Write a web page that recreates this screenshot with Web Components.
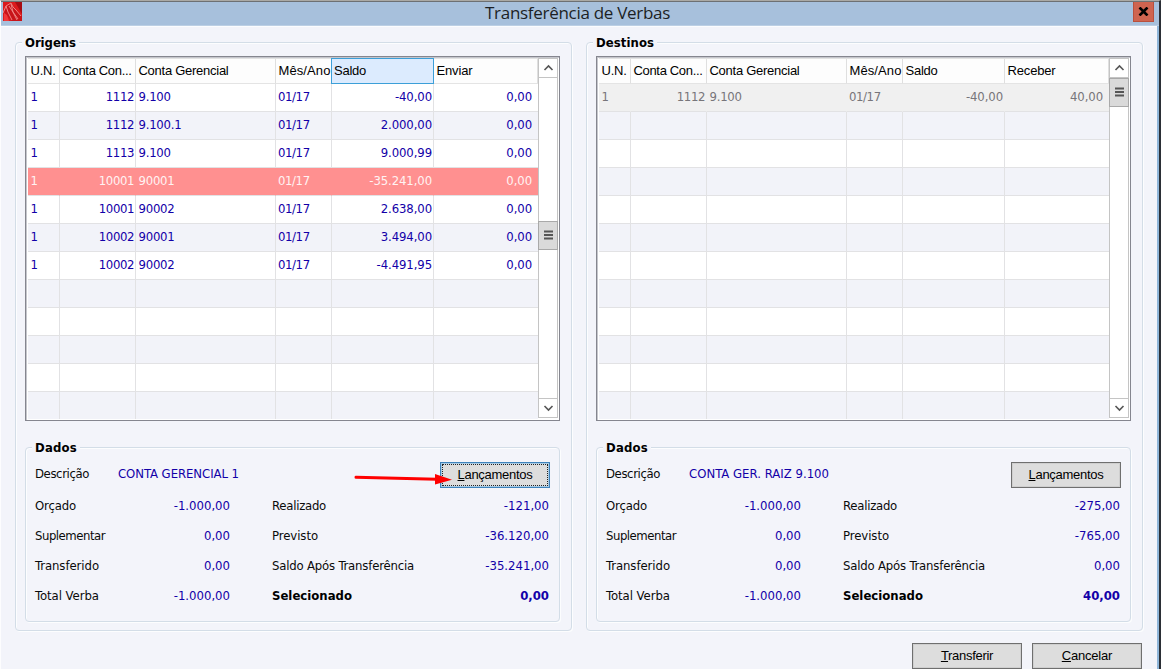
<!DOCTYPE html>
<html lang="pt-BR">
<head>
<meta charset="utf-8">
<title>Transferência de Verbas</title>
<style>
  html, body { margin: 0; height: 100%; overflow: hidden; }
  body { font: 13px/16px "DejaVu Sans Condensed", "DejaVu Sans", sans-serif; color: #0a0a0a; }
</style>
</head>
<body>
<tv-window>
  <tv-panel name="Origens" desc="CONTA GERENCIAL 1" desc-width="121" last="Enviar" sorted focused thumb="163"
    rows="1|1112|9.100|01/17|-40,00|0,00;1|1112|9.100.1|01/17|2.000,00|0,00;1|1113|9.100|01/17|9.000,99|0,00;!1|10001|90001|01/17|-35.241,00|0,00;1|10001|90002|01/17|2.638,00|0,00;1|10002|90001|01/17|3.494,00|0,00;1|10002|90002|01/17|-4.491,95|0,00"
    values="-1.000,00|-121,00|0,00|-36.120,00|0,00|-35.241,00|-1.000,00|0,00"></tv-panel>
  <tv-panel name="Destinos" desc="CONTA GER. RAIZ 9.100" desc-width="140" last="Receber" thumb="20"
    rows="#1|1112|9.100|01/17|-40,00|40,00"
    values="-1.000,00|-275,00|0,00|-765,00|0,00|0,00|-1.000,00|40,00"></tv-panel>
  <tv-button slot="actions"><tv-text w="52"><u>T</u>ransferir</tv-text></tv-button>
  <tv-button slot="actions"><tv-text w="50"><u>C</u>ancelar</tv-text></tv-button>
</tv-window>

<script>
// text run that is tracked to a given width
customElements.define('tv-text', class extends HTMLElement {
  connectedCallback() {
    if (this.shadowRoot) return
    const root = this.attachShadow({mode: 'open'})
    root.innerHTML = `
    <style>
      :host { display: inline-block; white-space: nowrap; }
      span { display: inline-block; }
    </style>
    <span><slot></slot></span>`
    const width = parseFloat(this.getAttribute('w'))
    if (!width) return
    const span = root.querySelector('span')
    const natural = span.getBoundingClientRect().width
    span.style.letterSpacing = `${(width - natural) / this.textContent.length}px`
  }
})

customElements.define('tv-button', class extends HTMLElement {
  connectedCallback() {
    if (this.shadowRoot) return
    this.attachShadow({mode: 'open'}).innerHTML = `
    <style>
      :host {
        display: flex;
        align-items: center;
        justify-content: center;
        box-sizing: border-box;
        width: 110px;
        height: 26px;
        border: 1px solid #6f6f6f;
        background: #dddddd;
        box-shadow: inset 0 0 0 1px #cfcfcf;
        font: 13px/16px "Liberation Sans", Arial, sans-serif;
        color: #000;
        position: relative;
      }
      :host([focused]) { border-color: #3f83bb; box-shadow: inset 0 0 0 1px #a9cbe4; }
      :host([focused])::after {
        content: "";
        position: absolute;
        inset: 1px;
        border: 1px dotted #222;
      }
    </style>
    <slot></slot>`
  }
})

customElements.define('tv-group', class extends HTMLElement {
  connectedCallback() {
    if (this.shadowRoot) return
    const name = this.getAttribute('name')
    this.attachShadow({mode: 'open'}).innerHTML = `
    <style>
      :host {
        display: block;
        box-sizing: border-box;
        border: 1px solid #d3dde7;
        border-radius: 4px;
        box-shadow: inset 1px 1px 0 #fcfdfe, 1px 1px 0 #fcfdfe;
      }
      .legend {
        display: block;
        width: max-content;
        height: 16px;
        margin: -8px 0 0 6px;
        padding: 0 3px;
        background: #f3f4fa;
        font-weight: bold;
        color: #000;
      }
    </style>
    <div class="legend"><tv-text w="${this.getAttribute('w')}">${name}</tv-text></div>
    <slot></slot>`
  }
})

customElements.define('tv-scrollbar', class extends HTMLElement {
  connectedCallback() {
    if (this.shadowRoot) return
    const top = parseInt(this.getAttribute('thumb')) - 20
    this.attachShadow({mode: 'open'}).innerHTML = `
    <style>
      :host {
        display: flex;
        flex-direction: column;
        box-sizing: border-box;
        width: 20px;
        background: #fff;
        border: solid #c4c4c4;
        border-width: 0 1px;
      }
      .arrow, .thumb { box-sizing: border-box; flex: none; display: flex; align-items: center; justify-content: center; }
      .arrow { height: 20px; border: solid #c4c4c4; border-width: 1px 0; }
      .down { margin-top: auto; }
      .thumb { height: 29px; margin: ${top}px -1px 0; background: #dadada; border: 1px solid #a9a9a9; }
    </style>
    <div class="arrow"><svg width="11" height="8" viewBox="0 0 11 8"><path d="M1.500 6 5.500 2 9.500 6" fill="none" stroke="#555" stroke-width="1.600"/></svg></div>
    <div class="thumb"><svg width="9" height="11" viewBox="0 0 9 11"><path d="M0 1.500H9M0 5H9M0 8.500H9" stroke="#555" stroke-width="1.800"/></svg></div>
    <div class="arrow down"><svg width="11" height="8" viewBox="0 0 11 8"><path d="M1.500 2 5.500 6 9.500 2" fill="none" stroke="#555" stroke-width="1.600"/></svg></div>`
  }
})

customElements.define('tv-grid', class extends HTMLElement {
  getHeaders() {
    const last = this.getAttribute('last')
    return [['U.N.', 25], ['Conta Con...', 69], ['Conta Gerencial', 90], ['Mês/Ano', 52], ['Saldo', 32], [last, last === 'Enviar' ? 36 : 48]]
  }

  getRows() {
    const rows = this.getAttribute('rows').split(';').map((line) => {
      const kind = line[0] === '!' ? 'negative' : line[0] === '#' ? 'disabled' : ''
      return {kind, cells: line.replace(/^[!#]/, '').split('|')}
    })
    while (rows.length < 12) rows.push({kind: '', cells: ['', '', '', '', '', '']})
    return rows
  }

  connectedCallback() {
    if (this.shadowRoot) return
    const sorted = this.hasAttribute('sorted')
    const head = this.getHeaders().map(([text, w]) =>
      `<div class="${sorted && text === 'Saldo' ? 'sorted' : ''}"><tv-text w="${w}">${text}</tv-text></div>`).join('')
    const body = this.getRows().map(({kind, cells}) =>
      `<div class="row ${kind}">${cells.map((c) => `<div>${c}</div>`).join('')}</div>`).join('')
    this.attachShadow({mode: 'open'}).innerHTML = `
    <style>
      :host {
        display: flex;
        box-sizing: border-box;
        height: 365px;
        padding: 1px 1px 2px;
        border: 1px solid #85868f;
        box-shadow: inset 1px 1px 0 #c5c6cc;
        background: #fff;
      }
      .table { flex: 1; padding-left: 1px; }
      .row, .head { display: grid; grid-template-columns: 32px 76px 140px 56px 102px 1fr; box-sizing: border-box; }
      .head {
        height: 26px;
        border-top: 1px solid #e2e2e2;
        font: 13px/16px "Liberation Sans", Arial, sans-serif;
        color: #000;
      }
      .head > div { box-sizing: border-box; background: #fdfdfd; border-right: 1px solid #dfdfdf; border-bottom: 1px solid #e4e4e4; padding: 4px 0 0 2.5px; }
      .head .sorted { margin: -1px 0 0 -1px; padding-left: 2px; border: 1px solid #3c9fd8; background: #dcebfe; }
      .row { height: 28px; line-height: 25px; letter-spacing: -0.4px; color: #1200a8; }
      .row > div { box-sizing: border-box; padding-left: 2.5px; border-right: 1px solid #e2e2e4; border-bottom: 1px solid #e2e2e4; }
      .row:nth-child(odd) { background: #f2f3f9; }
      .row > div:nth-child(2), .row > div:nth-child(5), .row > div:nth-child(6) { text-align: right; padding-right: 1px; }
      .row > div:nth-child(3) { letter-spacing: -0.25px; }
      .row > div:nth-child(4) { padding-left: 2px; }
      .row > div:nth-child(5), .row > div:nth-child(6) { letter-spacing: -0.1px; }
      .row > div:nth-child(6) { padding-right: 6px; border-right: 0; }
      .row.negative { background: #ff9090; color: #fff3f3; }
      .row.disabled { background: #f0f0f0; color: #77757a; }
      .row.negative > div, .row.disabled > div { border-right-color: transparent; }
      .row:last-child { height: 27px; }
      .row:last-child > div { border-bottom: 0; }
    </style>
    <div class="table"><div class="head">${head}</div>${body}</div>
    <tv-scrollbar thumb="${this.getAttribute('thumb')}"></tv-scrollbar>`
  }
})

customElements.define('tv-summary', class extends HTMLElement {
  connectedCallback() {
    if (this.shadowRoot) return
    const v = this.getAttribute('values').split('|')
    const labels = [['Orçado', 41], ['Realizado', 54], ['Suplementar', 70], ['Previsto', 46], ['Transferido', 64],
      ['Saldo Após Transferência', 142], ['Total Verba', 64], ['Selecionado', 80]]
    const cells = labels.map(([text, w], i) =>
      `<div><tv-text w="${w}">${text}</tv-text></div><div class="value">${v[i]}</div>`).join('')
    this.attachShadow({mode: 'open'}).innerHTML = `
    <style>
      :host { display: block; padding: 6px 10px 0 9px; }
      .top { display: flex; height: 26px; }
      .top > * { flex: none; }
      .name { width: 83px; padding-top: 4px; }
      .desc { padding-top: 4px; color: #1200a8; }
      tv-button { margin: 0 -1px 0 auto; }
      .grid { display: grid; grid-template-columns: 85px 110px 42px 120px 1fr; grid-auto-rows: 30px; line-height: 30px; margin-top: 3px; }
      .grid > div:nth-child(4n+3) { grid-column: 4; }
      .grid > div:nth-child(4n+1) { grid-column: 1; }
      .value { text-align: right; color: #1200a8; }
      .grid > div:nth-child(n+15) { font-weight: bold; }
      .grid > div:nth-child(15) { color: #000; }
    </style>
    <div class="top">
      <div class="name"><tv-text w="54">Descrição</tv-text></div>
      <div class="desc"><tv-text w="${this.getAttribute('desc-width')}">${this.getAttribute('desc')}</tv-text></div>
      <tv-button ${this.hasAttribute('focused') ? 'focused' : ''}><tv-text w="75"><u>L</u>ançamentos</tv-text></tv-button>
    </div>
    <div class="grid">${cells}</div>`
  }
})

customElements.define('tv-panel', class extends HTMLElement {
  connectedCallback() {
    if (this.shadowRoot) return
    const get = (name) => this.getAttribute(name)
    const focused = this.hasAttribute('focused')
    this.attachShadow({mode: 'open'}).innerHTML = `
    <style>
      :host { display: block; width: 557px; position: relative; }
      .outer { height: 589px; }
      tv-grid { margin: 5px 11px 0 9px; }
      .inner { height: 175px; margin: 26px 11px 0 9px; }
      .pointer { position: absolute; left: 338px; top: 429px; }
    </style>
    <tv-group class="outer" name="${get('name')}" w="${get('name') === 'Origens' ? 51 : 58}">
      <tv-grid rows="${get('rows')}" last="${get('last')}" thumb="${get('thumb')}" ${this.hasAttribute('sorted') ? 'sorted' : ''}></tv-grid>
      <tv-group class="inner" name="Dados" w="42">
        <tv-summary desc="${get('desc')}" desc-width="${get('desc-width')}" values="${get('values')}" ${focused ? 'focused' : ''}></tv-summary>
      </tv-group>
    </tv-group>
    ${focused ? `<svg class="pointer" width="102" height="16" viewBox="0 0 102 16">
      <path d="M3 6.300 84 8.300" stroke="#f00" stroke-width="3" stroke-linecap="round"/>
      <path d="M82 3 99 8.800 82 13.500Z" fill="#f00"/>
    </svg>` : ''}`
  }
})

customElements.define('tv-window', class extends HTMLElement {
  connectedCallback() {
    if (this.shadowRoot) return
    this.attachShadow({mode: 'open'}).innerHTML = `
    <style>
      :host {
        display: block;
        box-sizing: border-box;
        width: 1161px;
        height: 669px;
        overflow: hidden;
        border-top: 1px solid #aaa9a5;
        border-right: 2px solid #2b2f36;
        border-left: 1px solid #fdfdfe;
        background: #f3f4fa;
      }
      .bar {
        display: flex;
        align-items: flex-start;
        box-sizing: border-box;
        height: 25px;
        border-top: 1px solid #6d7073;
        border-bottom: 1px solid #bccfe4;
        background: #a7c0dc;
        padding: 0 5px 0 2px;
      }
      .bar svg { flex: none; display: block; }
      .title { flex: 1; text-align: center; font: 17px/21px "Open Sans", "Noto Sans", sans-serif; color: #1c1f24; }
      .close { display: flex; align-items: center; justify-content: center; box-sizing: border-box; width: 21px; height: 20px; background: #cf6450; border: 1px solid #b9503d; border-top: 0; }
      .client { height: 643px; box-sizing: border-box; border-right: 2px solid #8fb6da; box-shadow: inset 0 1px 0 #fbfcfe; }
      .panels { display: flex; gap: 14px; padding: 16px 0 0 14px; }
      .actions { display: flex; gap: 10px; justify-content: flex-end; padding: 12px 15px 0 0; }
    </style>
    <div class="bar">
      <svg width="19" height="19" viewBox="0 0 19 19">
        <rect width="19" height="19" fill="#dc1a1c"/>
        <path d="M12 0H19V12Z" fill="#a80c12"/>
        <path d="M1 10 5 3 8 1 13 8 19 14V19H9Z" fill="#c8141a"/>
        <path d="M0 11 3 4 8 1 10 5 13 8 18 14M3 4 5 10 9 18M8 2 10 10 14 18M6 4 10 10 15 17" fill="none" stroke="#f08f8c" stroke-width=".9"/>
        <path d="M1 11 4 13 6 19H1Z" fill="#f0383a"/>
      </svg>
      <div class="title"><tv-text w="185">Transferência de Verbas</tv-text></div>
      <div class="close"><svg width="11" height="9" viewBox="0 0 11 9"><path d="M1.500 .5 9.500 8.500M9.500 .5 1.500 8.500" stroke="#000" stroke-width="2.600"/></svg></div>
    </div>
    <div class="client">
      <div class="panels"><slot></slot></div>
      <div class="actions"><slot name="actions"></slot></div>
    </div>`
  }
})
</script>
</body>
</html>
